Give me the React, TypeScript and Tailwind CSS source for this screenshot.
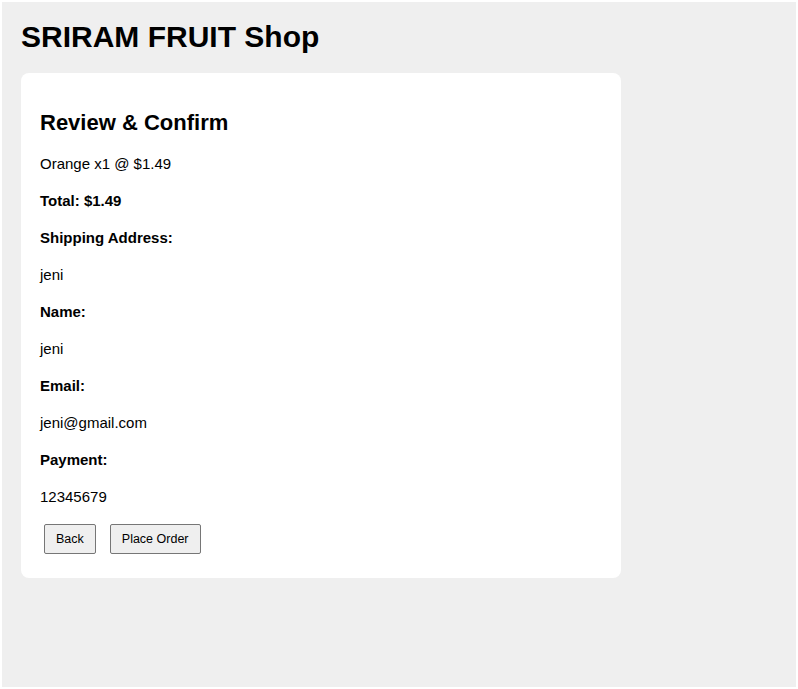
import React from 'react';

const rows: { text: string; bold?: boolean }[] = [
  { text: 'Orange x1 @ $1.49' },
  { text: 'Total: $1.49', bold: true },
  { text: 'Shipping Address:', bold: true },
  { text: 'jeni' },
  { text: 'Name:', bold: true },
  { text: 'jeni' },
  { text: 'Email:', bold: true },
  { text: 'jeni@gmail.com' },
  { text: 'Payment:', bold: true },
  { text: '12345679' },
];

const App = () => {
  return (
    <div className="bg-white p-[2px] h-screen" style={{ fontFamily: '"Liberation Sans", Arial, sans-serif' }}>
      <div className="bg-[#efefef] h-full px-[19px] pt-[17px] text-black">
        <h1 className="text-[30px] leading-[36px] font-bold mb-[18px]">SRIRAM FRUIT Shop</h1>

        {/* Review card */}
        <div className="w-[600px] bg-white rounded-lg px-[19px] pt-[36px] pb-[24px]">
          <h2 className="text-[22px] leading-[28px] font-bold mb-4">Review &amp; Confirm</h2>
          {rows.map((r, i) => (
            <p key={i} className={`text-[15px] leading-[21px] mb-4 ${r.bold ? 'font-bold' : ''}`}>
              {r.text}
            </p>
          ))}
          <div className="flex gap-[14px] pl-1 pt-[1px]">
            <button className="h-[30px] px-[11px] text-[12.5px] bg-[#efefef] border border-[#767676] rounded-[2px]">
              Back
            </button>
            <button className="h-[30px] px-[11px] text-[12.5px] bg-[#efefef] border border-[#767676] rounded-[2px]">
              Place Order
            </button>
          </div>
        </div>
      </div>
    </div>
  );
};

export default App;
